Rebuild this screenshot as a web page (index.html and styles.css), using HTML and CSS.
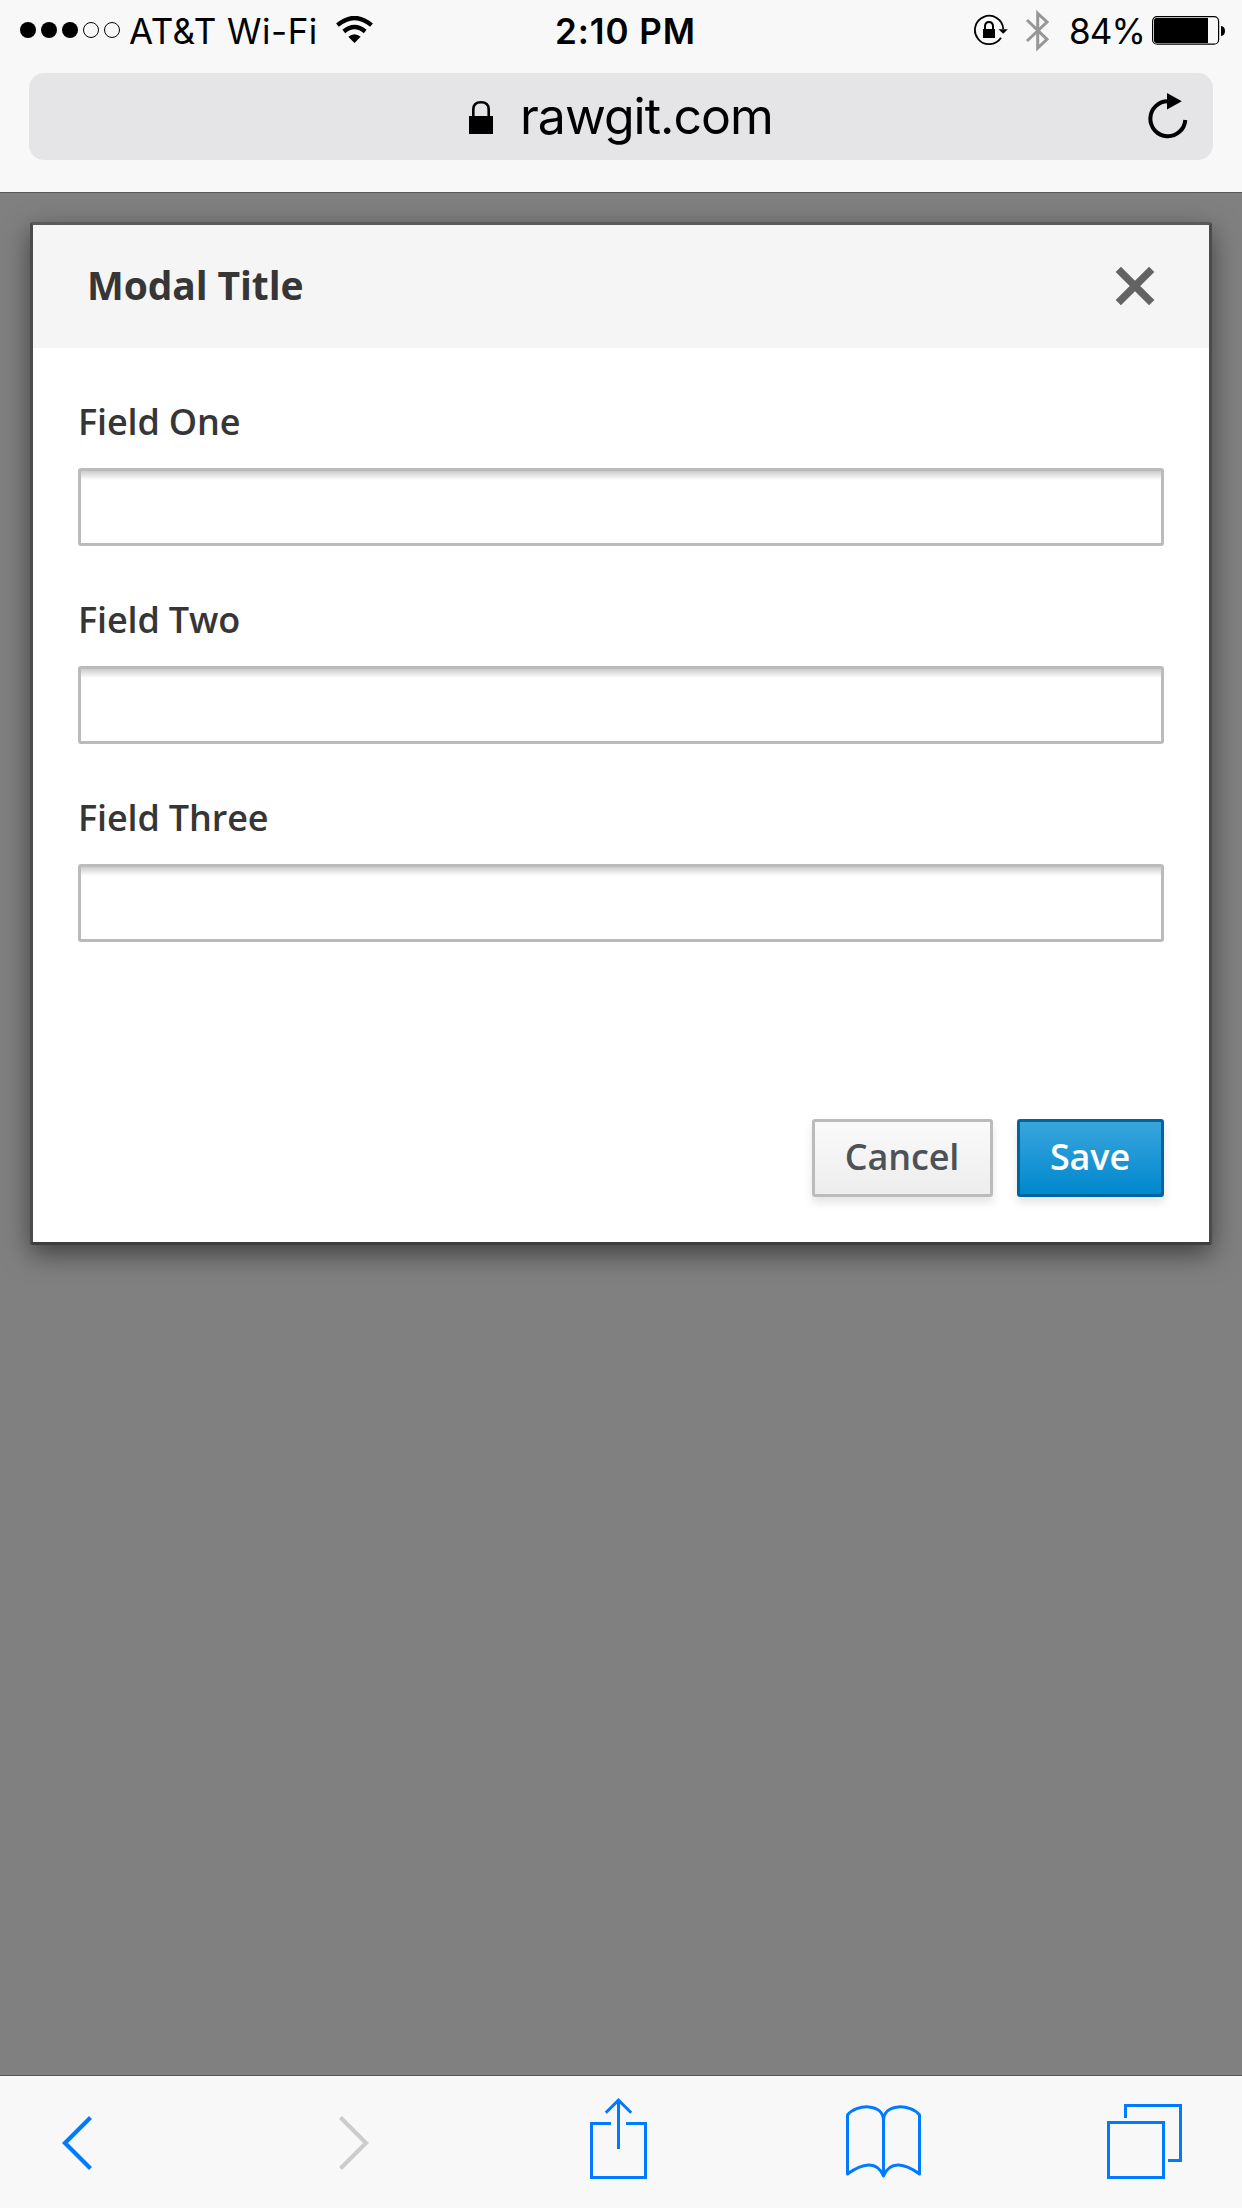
FILE: index.html
```html
<!DOCTYPE html>
<html lang="en">
<head>
<meta charset="utf-8">
<title>Modal Title</title>
<link rel="stylesheet" href="styles.css">
</head>
<body>
<div class="screen">
  <header class="browser-top">
    <div class="status">
      <div class="status-left">
        <svg class="signal" width="100" height="16" viewBox="0 0 100 16">
          <circle cx="8" cy="8" r="8"/><circle cx="29" cy="8" r="8"/><circle cx="50" cy="8" r="8"/>
          <g fill="none" stroke="#000"><circle cx="71" cy="8" r="7.5"/><circle cx="92" cy="8" r="7.5"/></g>
        </svg>
        <span class="carrier">AT&amp;T Wi-Fi</span>
        <svg class="wifi" width="38" height="28" viewBox="336 16 38 28">
          <path d="M337.500 25.200Q354.500 10.800 371.500 25.200M343.800 31.500Q354.500 22.500 365.200 31.500" fill="none" stroke="#000" stroke-width="4.300"/>
          <path d="M348.300 36.800Q354.500 31.800 360.700 36.800L354.500 43Z"/>
        </svg>
      </div>
      <span class="clock">2:10 PM</span>
      <div class="status-right">
        <svg class="rotation" width="35" height="32" viewBox="973 14 35 32">
          <path d="M1003.300 29A14.200 14.200 0 1 0 1001 37.800" fill="none" stroke="#000" stroke-width="1.800"/>
          <path d="M998.500 29.300H1007.800L1003.200 33.800Z"/>
          <path d="M983 29H995V38H983Z"/>
          <path d="M985 30V26.500Q985 22 989 22T993 26.500V30" fill="none" stroke="#000" stroke-width="2"/>
        </svg>
        <svg class="bluetooth" width="25" height="42" viewBox="1025 10 25 42">
          <path d="M1027 20L1047 39.300L1037.700 48V13.500L1047 22L1027 41" fill="none" stroke="#979797" stroke-width="3"/>
        </svg>
        <span class="percent">84%</span>
        <svg class="battery" width="74" height="30" viewBox="1152 16 74 30">
          <rect x="1152.600" y="16.600" width="66" height="27.600" rx="4.500" fill="none" stroke="#000" stroke-width="1.200"/>
          <path d="M1156.500 18H1208V43H1156.500Q1154 43 1154 40.500V20.500Q1154 18 1156.500 18Z"/>
          <path d="M1221 26Q1225 26.500 1225 31T1221 36Z"/>
        </svg>
      </div>
    </div>
    <div class="address">
      <svg class="lock" width="24" height="34" viewBox="469 101 24 34">
        <path d="M469 116H493V134H469Z"/>
        <path d="M473.300 117V109.500Q473.300 102.300 481 102.300T488.700 109.500V117" fill="none" stroke="#000" stroke-width="2.600"/>
      </svg>
      <span class="url">rawgit.com</span>
      <svg class="reload" width="40" height="46" viewBox="1148 93 40 46">
        <path d="M1168 101.200A17.500 17.500 0 1 0 1185.300 120" fill="none" stroke="#000" stroke-width="4"/>
        <path d="M1167 93V109.500L1181.800 101.200Z"/>
      </svg>
    </div>
  </header>

  <main class="backdrop">
    <section class="modal">
      <div class="modal-header">
        <h1 class="modal-title">Modal Title</h1>
        <svg class="close" width="40" height="40" viewBox="0 0 40 40">
          <path d="M3.300 3.300L36.700 36.700M36.700 3.300L3.300 36.700" fill="none" stroke="#636363" stroke-width="7.400"/>
        </svg>
      </div>
      <form class="modal-body">
        <div class="field"><label class="label" for="f1">Field One</label><input class="input" id="f1" type="text"></div>
        <div class="field"><label class="label" for="f2">Field Two</label><input class="input" id="f2" type="text"></div>
        <div class="field"><label class="label" for="f3">Field Three</label><input class="input" id="f3" type="text"></div>
      </form>
      <div class="modal-footer">
        <button class="btn btn-cancel" type="button">Cancel</button>
        <button class="btn btn-save" type="button">Save</button>
      </div>
    </section>
  </main>

  <nav class="toolbar">
    <svg class="tool-back" width="32" height="56" viewBox="61 2115 32 56"><path d="M90.500 2117.500L65 2143L90.500 2168.500"/></svg>
    <svg class="tool-forward" width="32" height="56" viewBox="338 2115 32 56"><path d="M340.500 2117.500L366 2143L340.500 2168.500"/></svg>
    <svg class="tool-share" width="57" height="82" viewBox="590 2098 57 82"><path d="M611 2123.500H591.500V2177.500H645.500V2123.500H626M618.500 2149V2100M605.800 2112.800L618.500 2100.200L631.200 2112.800"/></svg>
    <svg class="tool-book" width="75" height="74" viewBox="846 2105 75 74"><path d="M883.500 2176V2121C883.500 2102.500 856 2104 847.500 2115V2174C862 2163.500 877 2160 883.500 2176C890 2160 905 2163.500 919.500 2174V2115C911 2104 883.500 2102.500 883.500 2121"/></svg>
    <svg class="tool-tabs" width="75" height="75" viewBox="1107 2104 75 75"><path d="M1108.500 2122.500H1163.500V2177.500H1108.500ZM1125.500 2118V2105.500H1180.500V2160.500H1168"/></svg>
  </nav>
</div>
</body>
</html>
```
FILE: styles.css
```css
* { box-sizing: border-box; }
body { margin: 0; }
svg { display: block; flex: none; }

.screen {
  display: flex;
  flex-direction: column;
  width: 1242px;
  height: 2208px;
  overflow: hidden;
  color: #000;
  font-family: Inter, "Liberation Sans", sans-serif;
}

/* Status bar and address field */
.browser-top {
  flex: none;
  height: 193px;
  background: #f8f8f8;
  border-bottom: 1px solid #595959;
}
.status {
  display: grid;
  grid-template-columns: 1fr auto 1fr;
  height: 73px;
  padding: 0 16px 10px 20px;
  line-height: 63px;
  font-size: 35px;
  white-space: nowrap;
}
.status-left, .status-right { display: flex; align-items: flex-start; }
.status-right { justify-content: flex-end; }
.signal { margin-top: 22px; }
.carrier { width: 207px; margin-left: 9px; letter-spacing: 0.5px; }
.wifi { margin-top: 16px; }
.clock { padding-left: 5px; font-weight: 600; letter-spacing: 0.9px; }
.rotation { margin-top: 14px; }
.bluetooth { margin: 10px 0 0 17px; }
.percent { width: 83px; margin-left: 19px; letter-spacing: -0.9px; }
.battery { margin-top: 16px; }

.address {
  display: flex;
  align-items: center;
  height: 87px;
  margin: 0 29px;
  padding: 0 25px 0 440px;
  border-radius: 15px;
  background: #e5e5e7;
}
.lock { margin-top: 2px; }
.url { margin-left: 27px; font-size: 50px; line-height: 87px; letter-spacing: -1px; }
.reload { margin: 0 0 2px auto; }

/* Page behind the dialog */
.backdrop {
  flex: 1;
  padding: 29px 30px;
  background: #808080;
  font-family: "Open Sans", "Noto Sans", sans-serif;
}
.modal {
  display: flex;
  flex-direction: column;
  height: 1023px;
  border: 3px solid;
  border-color: #5a5a5a #4b4b4b #3e3e3e;
  border-radius: 3px;
  background: #fff;
  background-clip: padding-box;
  box-shadow: 0 9px 27px rgba(0, 0, 0, 0.5);
}
.modal-header {
  display: flex;
  align-items: center;
  justify-content: space-between;
  height: 123px;
  padding: 0 54px;
  background: #f5f5f5;
}
.modal-title {
  margin: 0 0 3px;
  color: #363636;
  font-size: 39px;
  font-weight: 700;
  line-height: 60px;
  letter-spacing: -0.1px;
}
.close { margin-bottom: 2px; }
.modal-body { padding: 0 45px; }
.field { padding-top: 44px; }
.label {
  display: block;
  margin-bottom: 16px;
  color: #363636;
  font-size: 36px;
  font-weight: 600;
  line-height: 60px;
  letter-spacing: -0.15px;
}
.input {
  display: block;
  width: 100%;
  height: 78px;
  padding: 0 18px;
  border: 3px solid #bbb;
  border-radius: 3px;
  background: linear-gradient(rgba(0, 0, 0, 0.2), rgba(0, 0, 0, 0) 9px) #fff;
  font: 36px "Open Sans", sans-serif;
}
.modal-footer {
  display: flex;
  justify-content: flex-end;
  gap: 24px;
  margin-top: auto;
  padding: 0 45px 45px;
}
.btn {
  height: 78px;
  padding: 0 1px 2px 0;
  border: 3px solid;
  border-radius: 3px;
  box-shadow: 0 6px 9px rgba(3, 3, 3, 0.1);
  font: 600 36px/70px "Open Sans", "Noto Sans", sans-serif;
  letter-spacing: -0.15px;
}
.btn-cancel {
  width: 181px;
  border-color: #bbb;
  background: linear-gradient(#fafafa, #ededed) padding-box;
  color: #4d5258;
}
.btn-save {
  width: 147px;
  border-color: #00659c;
  background: linear-gradient(#39a5dc, #0088ce) padding-box;
  color: #fff;
}

/* Browser toolbar */
.toolbar {
  display: flex;
  flex: none;
  align-items: flex-start;
  height: 133px;
  padding-left: 61px;
  border-top: 1px solid #595959;
  background: #f8f8f8;
  fill: none;
  stroke: #007aff;
  stroke-width: 3;
}
.tool-back { margin-top: 39px; stroke-width: 4.2; }
.tool-forward { margin: 39px 0 0 245px; stroke: #ccc; stroke-width: 4.2; }
.tool-share { margin: 22px 0 0 220px; }
.tool-book { margin: 29px 0 0 199px; stroke-linejoin: round; }
.tool-tabs { margin: 28px 0 0 186px; }
```
